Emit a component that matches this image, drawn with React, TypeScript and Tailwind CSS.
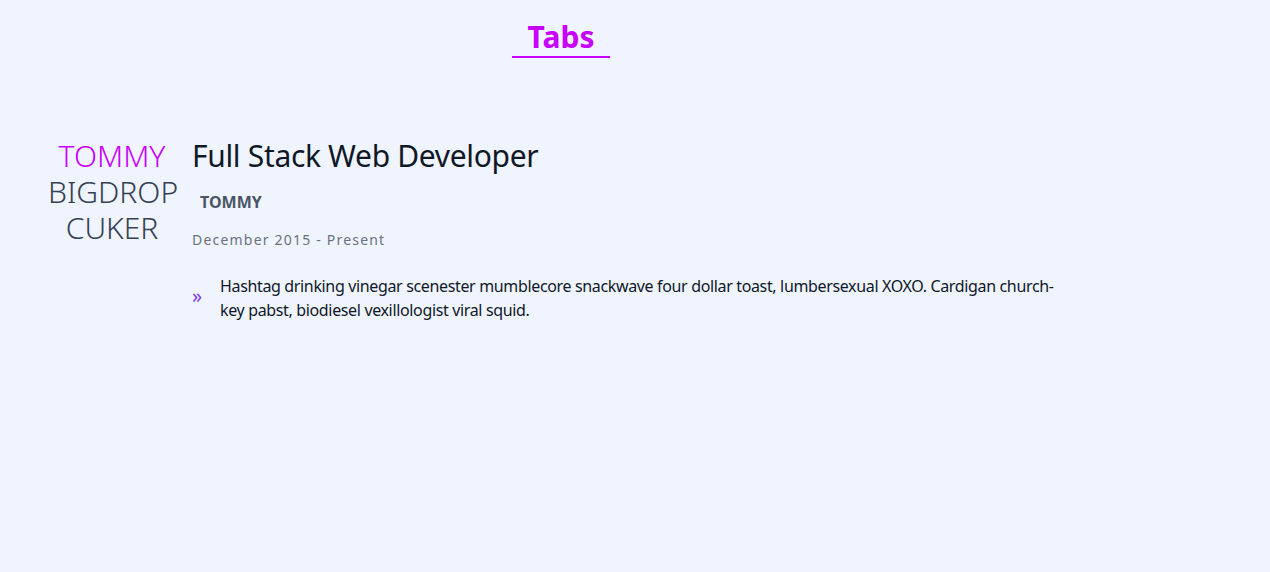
export default function App() {
  return (
    <div
      className="min-h-screen bg-[#eff4ff] text-gray-900"
      style={{ fontFamily: '"Noto Sans", "Open Sans", sans-serif' }}
    >
      {/* Header */}
      <div className="w-[1122px] flex justify-center pt-[18px]">
        <h1 className="px-4 text-3xl font-bold text-[#c800ff] border-b-2 border-[#c800ff] leading-[38px]">
          Tabs
        </h1>
      </div>

      {/* Experience */}
      <div className="flex gap-4 pl-12 mt-[80px]">
        <p className="w-32 shrink-0 text-center text-3xl leading-9 font-light text-gray-700 whitespace-nowrap">
          <span className="text-[#c800ff]">TOMMY</span>
          <br />
          BIGDROP
          <br />
          CUKER
        </p>

        <div className="flex-1">
          <h2 className="text-3xl leading-9 tracking-[-0.33px] text-gray-900">
            Full Stack Web Developer
          </h2>
          <h3 className="mt-4 pl-2 font-bold text-gray-600">TOMMY</h3>
          <p className="mt-4 text-sm tracking-[1.2px] text-gray-500">
            December 2015 - Present
          </p>
          <ul className="mt-6">
            <li className="flex items-center gap-4">
              <span className="w-3 text-xl leading-6 -mt-1 text-[#7c3aed]">»</span>
              <span className="w-[856px] leading-6 tracking-[-0.35px] text-gray-900">
                Hashtag drinking vinegar scenester mumblecore snackwave four
                dollar toast, lumbersexual XOXO. Cardigan church-key pabst,
                biodiesel vexillologist viral squid.
              </span>
            </li>
          </ul>
        </div>
      </div>
    </div>
  );
}
